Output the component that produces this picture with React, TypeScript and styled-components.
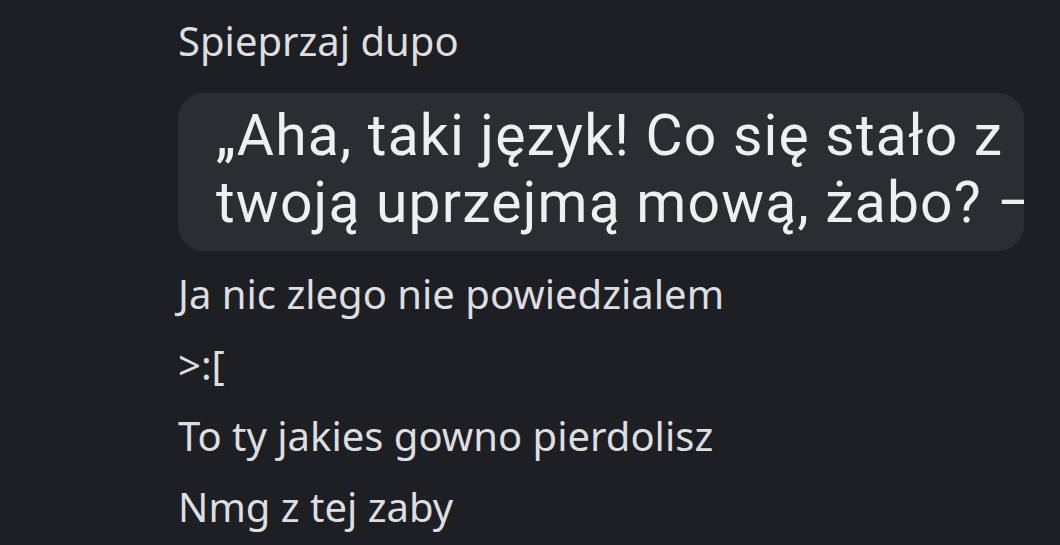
import React from "react";
import styled, { createGlobalStyle } from "styled-components";

const GlobalStyle = createGlobalStyle`
  html, body {
    margin: 0;
    padding: 0;
    background: #1e1f23;
  }
`;

const Chat = styled.div`
  width: 1060px;
  height: 545px;
  overflow: hidden;
  background: #1e1f23;
  padding: 14px 0 0 178px;
  box-sizing: border-box;
  display: flex;
  flex-direction: column;
  align-items: flex-start;
  font-family: "Noto Sans", "Open Sans", sans-serif;
  color: #dcdee2;
`;

const Line = styled.div`
  font-size: 40px;
  line-height: 71px;
  white-space: nowrap;
`;

const Header = styled(Line)`
  line-height: 54px;
`;

const Quote = styled.div`
  margin: 25px 0 7px;
  width: 846px;
  height: 158px;
  border-radius: 26px;
  background: #2c2d31;
  overflow: hidden;
  padding: 9px 0 0 38px;
  box-sizing: border-box;
  font-family: Roboto, "Noto Sans", sans-serif;
  font-size: 57px;
  letter-spacing: 1.2px;
  color: #eeeff1;
`;

const QuoteLine = styled.div`
  line-height: 67px;
  white-space: nowrap;
`;

export default function App() {
  return (
    <>
      <GlobalStyle />
      <Chat>
        <Header>Spieprzaj dupo</Header>
        <Quote>
          <QuoteLine>„Aha, taki język! Co się stało z</QuoteLine>
          <QuoteLine>twoją uprzejmą mową, żabo? –</QuoteLine>
        </Quote>
        <Line>Ja nic zlego nie powiedzialem</Line>
        <Line>&gt;:[</Line>
        <Line>To ty jakies gowno pierdolisz</Line>
        <Line>Nmg z tej zaby</Line>
      </Chat>
    </>
  );
}
